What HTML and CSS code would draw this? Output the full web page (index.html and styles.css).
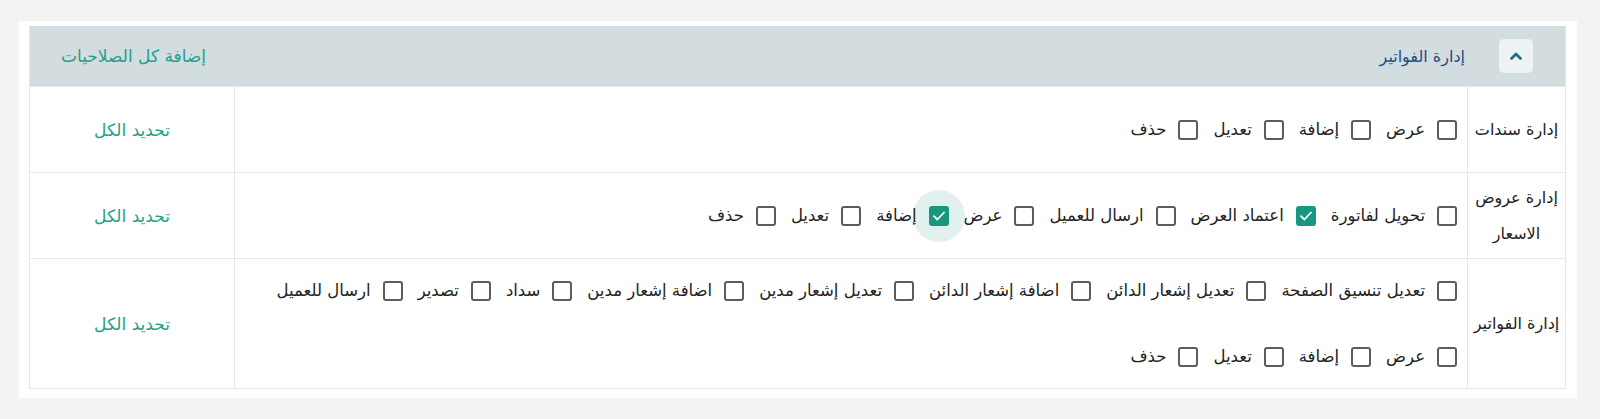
FILE: index.html
```html
<!DOCTYPE html>
<html lang="ar" dir="rtl">
<head>
<meta charset="utf-8">
<link rel="stylesheet" href="styles.css">
</head>
<body>
<div class="card">
  <div class="perm">
    <div class="head">
      <div class="head-title">
        <button class="toggle" type="button">
          <svg width="14" height="10" viewBox="0 0 14 10"><polyline points="2.5,7.5 7,3 11.5,7.5" fill="none" stroke="#1f6f7f" stroke-width="2.8" stroke-linecap="round" stroke-linejoin="round"/></svg>
        </button>
        <span class="title">إدارة الفواتير</span>
      </div>
      <a class="add-all">إضافة كل الصلاحيات</a>
    </div>

    <div class="row">
      <div class="label">إدارة سندات</div>
      <div class="opts">
        <div class="line">
          <label class="opt"><span class="cb"></span>عرض</label>
          <label class="opt"><span class="cb"></span>إضافة</label>
          <label class="opt"><span class="cb"></span>تعديل</label>
          <label class="opt"><span class="cb"></span>حذف</label>
        </div>
      </div>
      <div class="all">تحديد الكل</div>
    </div>

    <div class="row">
      <div class="label">إدارة عروض الاسعار</div>
      <div class="opts">
        <div class="line">
          <label class="opt"><span class="cb"></span>تحويل لفاتورة</label>
          <label class="opt"><span class="cb on"><svg width="14" height="12" viewBox="0 0 14 12"><polyline points="2,6.2 5.4,9.5 12,2.5" fill="none" stroke="#fff" stroke-width="1.8" stroke-linecap="round" stroke-linejoin="round"/></svg></span>اعتماد العرض</label>
          <label class="opt"><span class="cb"></span>ارسال للعميل</label>
          <label class="opt"><span class="cb"></span>عرض</label>
          <label class="opt"><span class="cb on focus"><svg width="14" height="12" viewBox="0 0 14 12"><polyline points="2,6.2 5.4,9.5 12,2.5" fill="none" stroke="#fff" stroke-width="1.8" stroke-linecap="round" stroke-linejoin="round"/></svg></span>إضافة</label>
          <label class="opt"><span class="cb"></span>تعديل</label>
          <label class="opt"><span class="cb"></span>حذف</label>
        </div>
      </div>
      <div class="all">تحديد الكل</div>
    </div>

    <div class="row tall">
      <div class="label">إدارة الفواتير</div>
      <div class="opts">
        <div class="line">
          <label class="opt"><span class="cb"></span>تعديل تنسيق الصفحة</label>
          <label class="opt"><span class="cb"></span>تعديل إشعار الدائن</label>
          <label class="opt"><span class="cb"></span>اضافة إشعار الدائن</label>
          <label class="opt"><span class="cb"></span>تعديل إشعار مدين</label>
          <label class="opt"><span class="cb"></span>اضافة إشعار مدين</label>
          <label class="opt"><span class="cb"></span>سداد</label>
          <label class="opt"><span class="cb"></span>تصدير</label>
          <label class="opt"><span class="cb"></span>ارسال للعميل</label>
        </div>
        <div class="line">
          <label class="opt"><span class="cb"></span>عرض</label>
          <label class="opt"><span class="cb"></span>إضافة</label>
          <label class="opt"><span class="cb"></span>تعديل</label>
          <label class="opt"><span class="cb"></span>حذف</label>
        </div>
      </div>
      <div class="all">تحديد الكل</div>
    </div>
  </div>
</div>
</body>
</html>
```
FILE: styles.css
```css
* { box-sizing: border-box; }
html, body { margin: 0; padding: 0; }
body {
  background: #f3f3f3;
  font-family: "DejaVu Sans", "Noto Sans", sans-serif;
  color: #222;
  width: 1600px;
  height: 419px;
  overflow: hidden;
}
.card {
  background: #fff;
  margin: 21px 23px 0 19px;
  padding: 5px 11px 9px 10px;
}
.perm {
  border: 1px solid #e6e6e6;
  border-top: none;
}
.head {
  height: 60px;
  background: #d3dcdf;
  display: flex;
  align-items: center;
  justify-content: space-between;
  padding: 0 32px 0 31px;
}
.head-title {
  display: flex;
  align-items: center;
  gap: 34px;
}
.toggle {
  width: 34px;
  height: 34px;
  border: none;
  border-radius: 5px;
  background: #eef2f3;
  display: flex;
  align-items: center;
  justify-content: center;
  padding: 0;
}
.title {
  color: #1c4d86;
  font-size: 16px;
}
.add-all {
  color: #23a08a;
  font-size: 17px;
}
.row {
  display: flex;
  height: 86px;
  border-top: 1px solid #e8e8e8;
}
.row.tall { height: 130px; }
.label {
  width: 98px;
  flex: none;
  display: flex;
  align-items: center;
  justify-content: center;
  text-align: center;
  font-size: 16px;
  line-height: 36px;
  padding: 0 4px;
  border-left: 1px solid #e8e8e8;
}
.opts {
  flex: 1;
  display: flex;
  flex-direction: column;
  justify-content: center;
  gap: 42px;
  padding-right: 10px;
  border-left: 1px solid #e8e8e8;
}
.line {
  display: flex;
  align-items: center;
  gap: 15px;
}
.opt {
  display: flex;
  align-items: center;
  gap: 12px;
  font-size: 16.5px;
  white-space: nowrap;
  line-height: 24px;
  isolation: isolate;
}
.cb {
  position: relative;
  width: 20px;
  height: 20px;
  border: 2px solid #5c5c5c;
  border-radius: 3px;
  display: flex;
  align-items: center;
  justify-content: center;
  flex: none;
}
.cb.on {
  background: #17977f;
  border-color: #17977f;
}
.cb.focus::before {
  content: "";
  position: absolute;
  width: 52px;
  height: 52px;
  border-radius: 50%;
  background: #e2f0ee;
  left: 50%;
  top: 50%;
  transform: translate(-50%, -50%);
  z-index: -1;
}
.cb svg { position: relative; }
.all {
  width: 204px;
  flex: none;
  display: flex;
  align-items: center;
  justify-content: center;
  color: #23a08a;
  font-size: 17px;
}
```
